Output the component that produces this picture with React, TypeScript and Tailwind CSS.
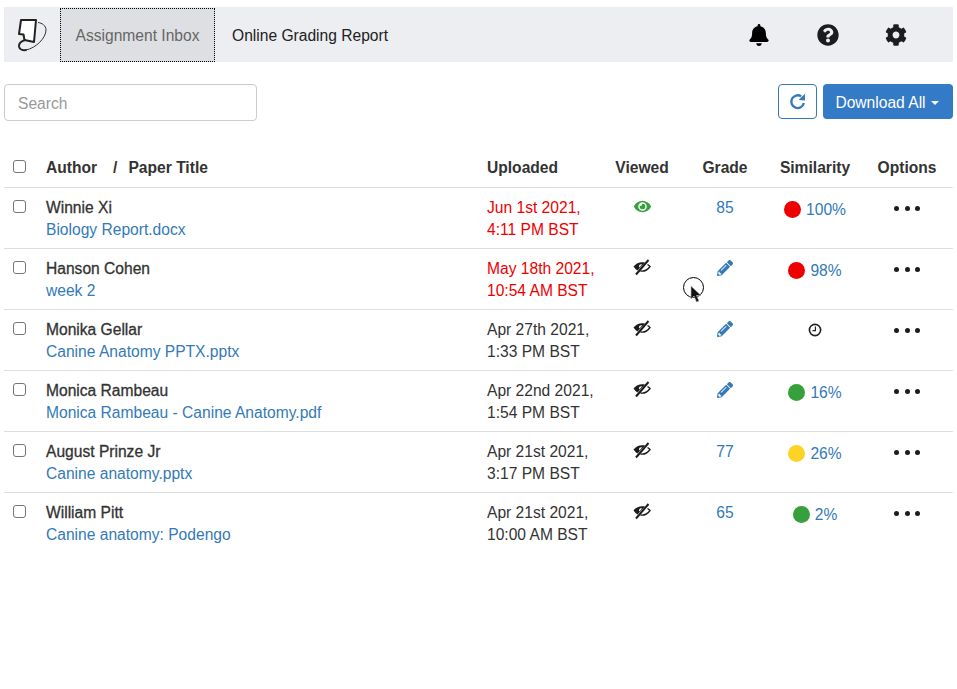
import { FaBell, FaCog, FaEye, FaPencilAlt, FaQuestionCircle } from "react-icons/fa";

type Row = {
    author: string;
    title: string;
    date: string;
    time: string;
    late?: boolean;
    viewed?: boolean;
    grade?: string;
    dot?: string;
    similarity?: string;
};

const rows: Row[] = [
    { author: "Winnie Xi", title: "Biology Report.docx", date: "Jun 1st 2021,", time: "4:11 PM BST", late: true, viewed: true, grade: "85", dot: "bg-[#ee0000]", similarity: "100%" },
    { author: "Hanson Cohen", title: "week 2", date: "May 18th 2021,", time: "10:54 AM BST", late: true, dot: "bg-[#ee0000]", similarity: "98%" },
    { author: "Monika Gellar", title: "Canine Anatomy PPTX.pptx", date: "Apr 27th 2021,", time: "1:33 PM BST" },
    { author: "Monica Rambeau", title: "Monica Rambeau - Canine Anatomy.pdf", date: "Apr 22nd 2021,", time: "1:54 PM BST", dot: "bg-[#36a03c]", similarity: "16%" },
    { author: "August Prinze Jr", title: "Canine anatomy.pptx", date: "Apr 21st 2021,", time: "3:17 PM BST", grade: "77", dot: "bg-[#ffd226]", similarity: "26%" },
    { author: "William Pitt", title: "Canine anatomy: Podengo", date: "Apr 21st 2021,", time: "10:00 AM BST", grade: "65", dot: "bg-[#36a03c]", similarity: "2%" },
];

const gridCols = "grid grid-cols-[41px_442px_118px_74px_92px_88px_94px]";

function Checkbox() {
    return <span className="block h-[13px] w-[13px] rounded-[3px] border border-[#767676] bg-white" />;
}

function Logo() {
    return (
        <svg width="34" height="36" viewBox="14 16 34 36" fill="none">
            <path d="M21 19 L36 19 L34 41 L24.5 39 L23.5 33.5 L19 33 Z" fill="white" stroke="#222" strokeWidth="2" strokeLinejoin="round" />
            <path d="M25 39 C22 40 18.5 42 19 45.5 C19.5 48.5 23 49.5 26 49" stroke="#222" strokeWidth="2" strokeLinecap="round" />
            <path d="M26 49 C36 47 46 37 46 29 C46 24.5 42 22 38 21.5" stroke="#333" strokeWidth="1" />
        </svg>
    );
}

function EyeClosed() {
    return (
        <svg width="18" height="18" viewBox="0 0 18 18" fill="none">
            <path d="M0.5 8.5 C3.5 4.5 8 3.5 12 4.5 L4.5 12.5 C3 11.5 1.5 10 0.5 8.5 Z M6 8.5 C6 7 7.5 6 9 6.5 L6.5 9.5 Z" fill="#1c1c1f" fillRule="evenodd" />
            <path d="M3 16.5 L15.5 2" stroke="#1c1c1f" strokeWidth="2" />
            <path d="M14.5 6.5 C15.5 7.2 16.5 8 17 8.5 C14.5 12 10.5 13.5 7.5 13" stroke="#1c1c1f" strokeWidth="1.4" />
        </svg>
    );
}

function Refresh() {
    return (
        <svg width="17" height="17" viewBox="0 0 16 16" fill="none" className="text-[#337ab7]">
            <path d="M14 9.5 A6 6 0 1 1 11.5 3.2" stroke="currentColor" strokeWidth="2.2" />
            <path d="M15 0.8 L15 7 L9 6.5 Z" fill="currentColor" />
        </svg>
    );
}

function Clock() {
    return (
        <svg width="14" height="14" viewBox="0 0 14 14" fill="none">
            <circle cx="7" cy="7" r="5.6" stroke="#222" strokeWidth="1.6" />
            <path d="M7.4 3.5 V7.6 H4.5" stroke="#222" strokeWidth="1.2" />
        </svg>
    );
}

export default function App() {
    return (
        <div className="relative min-h-[689px] bg-white px-1 pt-[7px] font-['Liberation_Sans',Arial,sans-serif] text-[15.6px] text-[#333333]">
            {/* Navbar */}
            <nav className="flex h-[55px] items-stretch bg-[#eceef1]">
                <div className="flex w-14 items-center pl-[10px]">
                    <Logo />
                </div>
                <a className="mt-px flex w-[155px] items-center justify-center border border-dotted border-black bg-[#dddfe2] pt-px text-[#666666]">Assignment Inbox</a>
                <a className="flex items-center pl-[17px] pt-[2px] text-[#222222]">Online Grading Report</a>
                <div className="ml-auto flex items-center pr-[46px] text-[22px] text-[#1c1c1f]">
                    <FaBell className="text-black" />
                    <FaQuestionCircle className="ml-[47px]" />
                    <FaCog className="ml-[46px]" />
                </div>
            </nav>

            {/* Toolbar */}
            <div className="mt-[22px] flex items-start justify-between">
                <input
                    placeholder="Search"
                    className="h-[37px] w-[253px] rounded border border-[#cccccc] px-[13px] pt-[3px] outline-none placeholder:text-[#999999]"
                />
                <div className="flex gap-[6px]">
                    <button className="flex h-[35px] w-[39px] items-center justify-center rounded border border-[#337ab7] bg-white">
                        <Refresh />
                    </button>
                    <button className="flex h-[35px] w-[130px] items-center justify-center gap-[5px] rounded bg-[#337ac7] pr-[2px] pt-[2px] text-white">
                        Download All
                        <span className="border-x-[4px] border-t-[4px] border-x-transparent border-t-white" />
                    </button>
                </div>
            </div>

            {/* Table header */}
            <div className={`${gridCols} mt-[27px] h-[40px] items-center border-b border-[#dddddd] font-bold`}>
                <div className="pb-[3px] pl-[9px]">
                    <Checkbox />
                </div>
                <div className="flex pl-px pt-px">
                    <span>Author</span>
                    <span className="ml-[16px]">/</span>
                    <span className="ml-[11px]">Paper Title</span>
                </div>
                <div className="pt-px">Uploaded</div>
                <div className="pt-px text-center">Viewed</div>
                <div className="pt-px text-center">Grade</div>
                <div className="pt-px text-center">Similarity</div>
                <div className="pl-[2px] pt-px text-center">Options</div>
            </div>

            {/* Rows */}
            {rows.map((row, i) => (
                <div key={row.author} className={`${gridCols} h-[61px] pt-[9px] ${i < rows.length - 1 ? "border-b border-[#dddddd]" : ""}`}>
                    <div className="pl-[9px] pt-[3px]">
                        <Checkbox />
                    </div>
                    <div className="pl-px leading-[22px]">
                        <div className="text-[#333333] [-webkit-text-stroke:0.3px_#333333]">{row.author}</div>
                        <a className="text-[#337ab7]">{row.title}</a>
                    </div>
                    <div className={`leading-[22px] ${row.late ? "text-[#ee0000]" : "text-[#333333]"}`}>
                        <div>{row.date}</div>
                        <div>{row.time}</div>
                    </div>
                    <div className="flex justify-center">
                        {row.viewed ? <FaEye className="mt-[1px] text-[17px] text-[#36a03c]" /> : <EyeClosed />}
                    </div>
                    <div className="flex justify-center leading-[22px] text-[#337ab7]">
                        {row.grade ? row.grade : <FaPencilAlt className="mt-[2px] text-[16px]" />}
                    </div>
                    <div className="flex items-start justify-center gap-[5px] pt-[2px] leading-[22px]">
                        {row.similarity ? (
                            <>
                                <span className={`mt-[2px] h-[17px] w-[17px] rounded-full ${row.dot}`} />
                                <a className="text-[#337ab7]">{row.similarity}</a>
                            </>
                        ) : (
                            <span className="mt-[2px]">
                                <Clock />
                            </span>
                        )}
                    </div>
                    <div className="flex justify-center gap-[5.5px] pl-[2px] pt-[9px]">
                        <span className="h-[5px] w-[5px] rounded-full bg-[#1c1c1f]" />
                        <span className="h-[5px] w-[5px] rounded-full bg-[#1c1c1f]" />
                        <span className="h-[5px] w-[5px] rounded-full bg-[#1c1c1f]" />
                    </div>
                </div>
            ))}

            {/* Recorded mouse pointer */}
            <div className="absolute left-[683px] top-[277px] h-[21px] w-[21px] rounded-full border border-black" />
            <svg className="absolute left-[690px] top-[285px]" width="13" height="19" viewBox="0 0 13 19">
                <path d="M1 1 L1 14 L4 11 L6.5 17 L9 16 L6.5 10.5 L11 10.5 Z" fill="#111" stroke="#bbb" strokeWidth="0.6" />
            </svg>
        </div>
    );
}
